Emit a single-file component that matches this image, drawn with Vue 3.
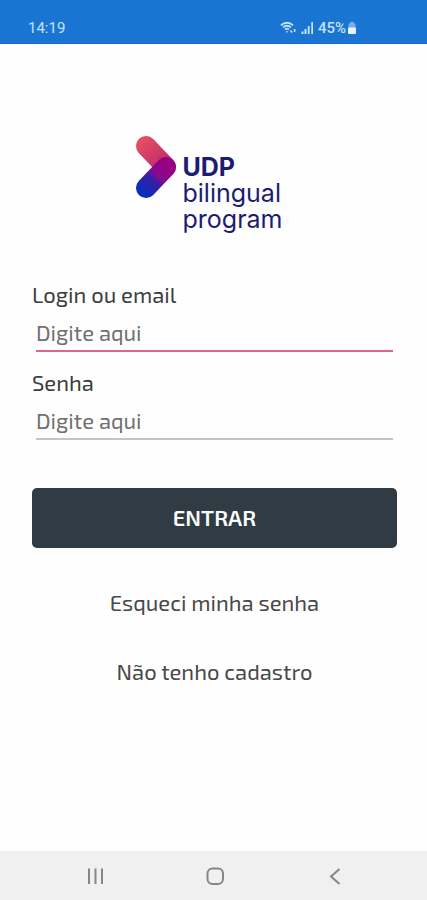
<script setup>
import { reactive } from 'vue'

const UI = reactive({
    login: '',
    senha: ''
})
</script>

<template>
    <div class="page">
        <header class="status">
            <span>14:19</span>
            <div class="status-right">
                <svg width="17" height="14" viewBox="0 0 17 14" fill="none" stroke="#c5e2f6">
                    <path d="M1 4.2Q7 -0.8 13 4.2M3 6.4Q7 3.2 11 6.4M5 8.4Q7 7 9 8.4" stroke-width="1.8" />
                    <path d="M7 12L5.8 10.2H8.2Z" fill="#c5e2f6" stroke="none" />
                    <path d="M10.5 9.5L12 11.5M14.6 8V11" stroke-width="1.6" />
                </svg>
                <svg width="13" height="14" viewBox="0 0 13 14" fill="#c5e2f6">
                    <path d="M0.5 10.5h2V13h-2zM3.500 8h2v5h-2zM6.800 5h1.800v8H6.800zM10.300 1H12v12h-1.700z" />
                </svg>
                <span class="percent">45%</span>
                <svg width="10" height="14" viewBox="0 0 10 14">
                    <path d="M3 1h4v1.5h1.5V7h-7V2.500H3z" fill="#78afe2" />
                    <path d="M1 6.500h8V12q0 1-1 1H2q-1 0-1-1z" fill="#e4f3fd" />
                </svg>
            </div>
        </header>

        <main>
            <div class="logo">
                <svg class="mark" width="42" height="64" viewBox="0 0 42 64" fill="none" stroke-linecap="round" stroke-width="20">
                    <defs>
                        <linearGradient id="top" gradientUnits="userSpaceOnUse" x1="8" y1="6" x2="34" y2="36">
                            <stop offset="0" stop-color="#e24e62" />
                            <stop offset="1" stop-color="#b52470" />
                        </linearGradient>
                        <linearGradient id="bottom" gradientUnits="userSpaceOnUse" x1="8" y1="56" x2="31" y2="32">
                            <stop offset="0" stop-color="#0a2fb8" />
                            <stop offset="0.45" stop-color="#3a1ca6" />
                            <stop offset="0.65" stop-color="#850a92" />
                            <stop offset="1" stop-color="#960082" />
                        </linearGradient>
                    </defs>
                    <path d="M11 11L31 32" stroke="url(#top)" />
                    <path d="M11 53L31 32" stroke="url(#bottom)" />
                </svg>
                <div class="logo-text">
                    <strong>UDP</strong>
                    <span>bilingual</span>
                    <span>program</span>
                </div>
            </div>

            <form @submit.prevent>
                <div class="field active">
                    <label for="login">Login ou email</label>
                    <input id="login" v-model="UI.login" type="text" placeholder="Digite aqui">
                </div>
                <div class="field">
                    <label for="senha">Senha</label>
                    <input id="senha" v-model="UI.senha" type="password" placeholder="Digite aqui">
                </div>
                <button class="enter" type="submit">ENTRAR</button>
            </form>

            <div class="links">
                <a href="#">Esqueci minha senha</a>
                <a href="#">Não tenho cadastro</a>
            </div>
        </main>

        <nav class="navbar">
            <button type="button" aria-label="Recentes">
                <svg width="20" height="20" viewBox="0 0 20 20" fill="none" stroke="#868686" stroke-width="2">
                    <path d="M4 2.500v15.500M10.500 2.500v15.500M17 2.500v15.500" />
                </svg>
            </button>
            <button type="button" aria-label="Início">
                <svg width="20" height="20" viewBox="0 0 20 20" fill="none" stroke="#868686" stroke-width="2">
                    <rect x="2.5" y="2.500" width="15.5" height="15.5" rx="5" />
                </svg>
            </button>
            <button type="button" aria-label="Voltar">
                <svg width="20" height="20" viewBox="0 0 20 20" fill="none" stroke="#868686" stroke-width="2">
                    <path d="M14.500 3L6 10.500l8.500 7.500" />
                </svg>
            </button>
        </nav>
    </div>
</template>

<style>
body {
    background-color: #fefefe;
}
</style>

<style scoped>
.page {
    display: flex;
    flex-direction: column;
    min-height: 100vh;
    font-family: "Exo 2", "Noto Sans", sans-serif;
    font-size: 22px;
    line-height: 28px;
    color: #3c3c3c;
}

.status {
    display: flex;
    justify-content: space-between;
    align-items: flex-end;
    height: 44px;
    padding: 0 70px 7px 28px;
    box-sizing: border-box;
    background-color: #1a75d2;
    border-bottom: 1px solid #1467c6;
    font-family: Roboto, sans-serif;
    font-size: 15px;
    line-height: 16px;
    color: #c5e2f6;
}

.status-right {
    display: flex;
    align-items: center;
    gap: 4px;
}

.percent {
    margin-right: -3px;
    font-weight: 500;
}

main {
    flex: 1;
    padding: 91px 30px 32px 32px;
}

.logo {
    display: flex;
    justify-content: center;
    gap: 6px;
    margin-right: 12px;
}

.logo-text {
    display: flex;
    flex-direction: column;
    padding-top: 19px;
    font-family: Inter, sans-serif;
    font-size: 25px;
    line-height: 26px;
    color: #1c1c72;
}

.logo-text span {
    font-weight: 400;
}

form {
    display: flex;
    flex-direction: column;
    gap: 16px;
    margin-top: 48px;
}

.field {
    display: flex;
    flex-direction: column;
    gap: 6px;
}

.field input {
    height: 38px;
    margin: 0 4px;
    padding: 0;
    box-sizing: border-box;
    border: none;
    border-bottom: 2px solid #c4c4c4;
    border-radius: 0;
    outline: none;
    background: none;
    font: inherit;
    color: #3c3c3c;
}

.field.active input {
    border-bottom-color: #e0648c;
}

.field input::placeholder {
    color: #707070;
    opacity: 1;
}

.enter {
    height: 60px;
    margin-top: 32px;
    padding: 0 0 3px;
    border: none;
    border-radius: 5px;
    background-color: #303b43;
    font: inherit;
    font-weight: 600;
    color: #fafcfd;
    cursor: pointer;
}

.links {
    display: flex;
    flex-direction: column;
    align-items: center;
    gap: 41px;
    margin-top: 40px;
}

.links a {
    color: #484848;
    text-decoration: none;
}

.navbar {
    display: flex;
    justify-content: center;
    align-items: center;
    gap: 100px;
    height: 49px;
    padding-left: 2px;
    background-color: #f0f0f0;
}

.navbar button {
    display: flex;
    padding: 0;
    border: none;
    background: none;
    cursor: pointer;
}
</style>
